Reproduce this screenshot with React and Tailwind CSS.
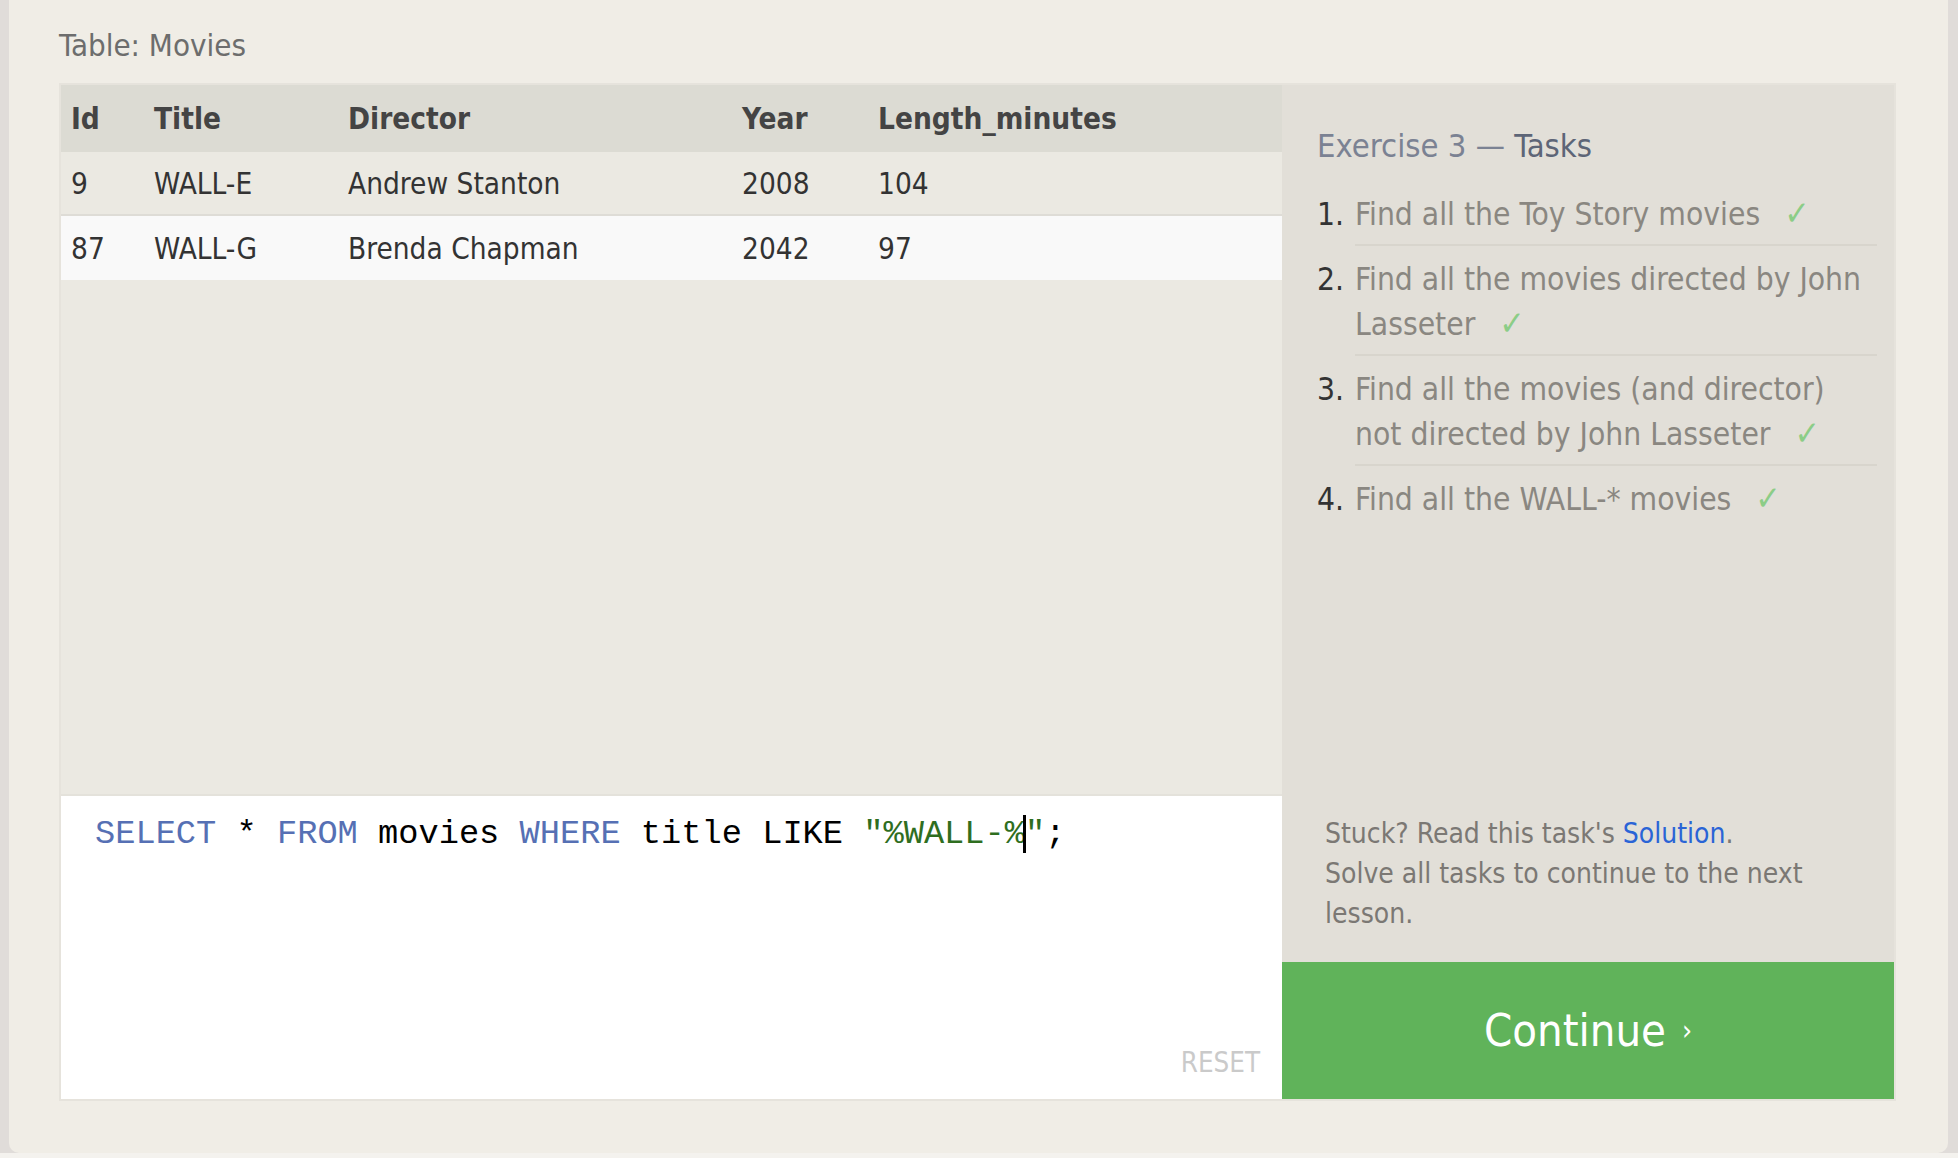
import React from 'react';

const rows = [
  { id: 9, title: 'WALL-E', director: 'Andrew Stanton', year: 2008, length: 104 },
  { id: 87, title: 'WALL-G', director: 'Brenda Chapman', year: 2042, length: 97 },
];

const tasks = [
  'Find all the Toy Story movies',
  'Find all the movies directed by John Lasseter',
  'Find all the movies (and director) not directed by John Lasseter',
  'Find all the WALL-* movies',
];

const cols = 'grid grid-cols-[83px_194px_394px_136px_1fr] pl-[10px]';

export default function App() {
  return (
    <div
      className="w-full h-[1158px] bg-[#f4f2ee] overflow-hidden"
      style={{ fontFamily: '"DejaVu Sans Condensed", "DejaVu Sans", sans-serif' }}
    >
      <div className="flex h-[1153px] bg-[#e0dcd9]">
        <div className="w-[9px]" />
        <div className="flex-1 mr-[10px] bg-[#f0ede6] rounded-b-[10px] pl-[50px] pr-[52px] flex flex-col">
          {/* Table label */}
          <div className="h-[83px] pt-[26px] text-[31px] leading-[38px] text-[#6d6d6d]">Table: Movies</div>

          <div className="flex h-[1018px] border-2 border-[#e6e3dc]">
            {/* Left: results + editor */}
            <div className="w-[1221px] flex flex-col">
              <div className="h-[709px] bg-[#ebe9e2] text-[29.5px] text-[#333]">
                <div className={`${cols} h-[67px] pt-[2px] items-center bg-[#dcdbd3] font-bold text-[#444]`}>
                  <div>Id</div>
                  <div>Title</div>
                  <div>Director</div>
                  <div>Year</div>
                  <div>Length_minutes</div>
                </div>
                {rows.map((r, i) => (
                  <div
                    key={r.id}
                    className={`${cols} h-[64px] pt-[3px] items-center ${i === 0 ? 'bg-[#ebe9e2] border-b-2 border-[#dedcd6]' : 'bg-[#f9f9f9]'}`}
                  >
                    <div>{r.id}</div>
                    <div>{r.title}</div>
                    <div>{r.director}</div>
                    <div>{r.year}</div>
                    <div>{r.length}</div>
                  </div>
                ))}
              </div>
              <div className="flex-1 bg-white border-t-2 border-[#e4e2db] flex flex-col">
                <div
                  className="pl-[34px] pt-[16px] text-[33.7px] leading-[44px] text-black whitespace-pre"
                  style={{ fontFamily: '"Liberation Mono", monospace' }}
                >
                  <span className="text-[#5670b4]">SELECT</span> * <span className="text-[#5670b4]">FROM</span> movies{' '}
                  <span className="text-[#5670b4]">WHERE</span> title LIKE <span className="text-[#2f6e1f]">"%WALL-%</span>
                  <span className="inline-block w-[3px] h-[38px] bg-black align-middle -mx-[1.5px]" />
                  <span className="text-[#2f6e1f]">"</span>;
                </div>
                <div className="flex-1" />
                <div className="flex justify-end pr-[22px] pb-[21px] text-[27.5px] leading-[32px] text-[#cacaca]">RESET</div>
              </div>
            </div>

            {/* Right: tasks */}
            <div className="flex-1 flex flex-col bg-[#e2dfd8]">
              <div className="flex-1 pl-[35px] pr-[17px]">
                <div className="pt-[41px] text-[32.5px] leading-[40px] text-[#7b8293]">
                  Exercise 3 — <span className="text-[#5d6577]">Tasks</span>
                </div>
                <ol className="mt-[15px]">
                  {tasks.map((t, i) => (
                    <li key={i} className="flex text-[31.5px] leading-[45px]">
                      <div className="w-[38px] shrink-0 pt-[11px] text-[#333]">{i + 1}.</div>
                      <div
                        className={`flex-1 pt-[11px] pb-[7px] text-[#8a8781] ${i < tasks.length - 1 ? 'border-b-2 border-[#d8d5cd]' : ''}`}
                      >
                        {t}
                        <span className="ml-[24px] text-[34px] leading-none text-[#8ccd87]">✓</span>
                      </div>
                    </li>
                  ))}
                </ol>
              </div>
              <div className="pl-[43px] pb-[28px] w-[540px] text-[28px] leading-[40px] text-[#7b7874]">
                Stuck? Read this task's <span className="text-[#2a64d6]">Solution</span>.
                <br />
                Solve all tasks to continue to the next lesson.
              </div>
              <div className="h-[137px] bg-[#60b35a] flex items-center justify-center text-white">
                <span className="text-[45px] leading-[52px]">Continue</span>
                <span className="ml-[16px] text-[28px] leading-[52px]">›</span>
              </div>
            </div>
          </div>
        </div>
      </div>
    </div>
  );
}
